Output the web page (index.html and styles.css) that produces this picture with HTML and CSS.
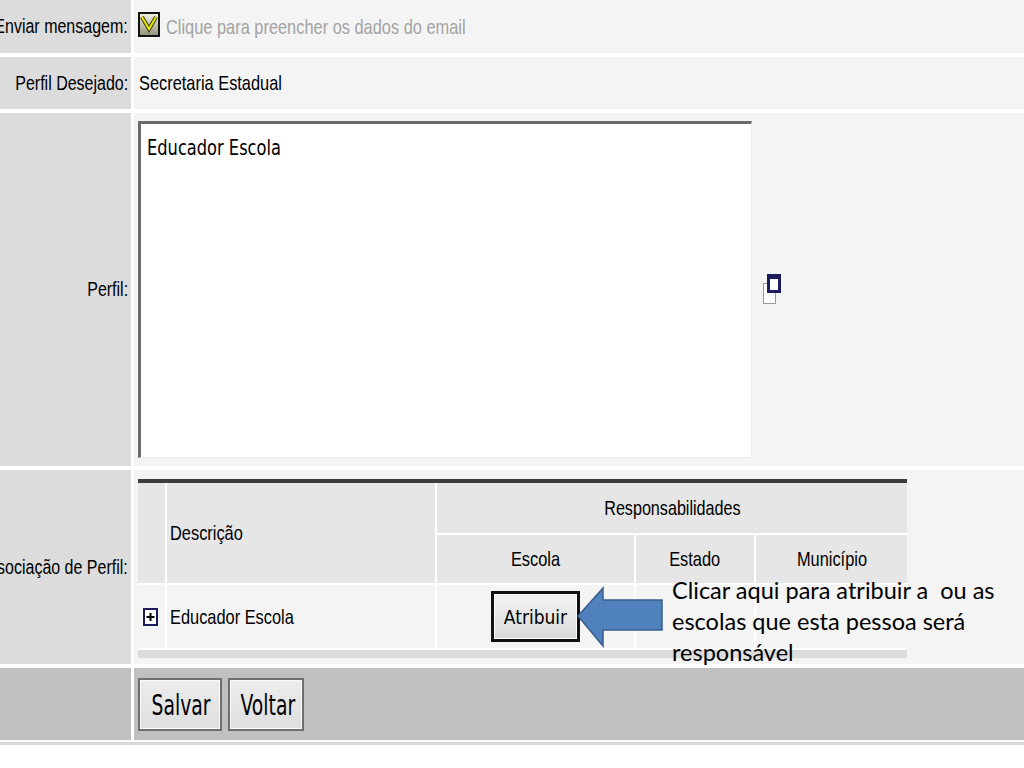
FILE: index.html
```html
<!DOCTYPE html>
<html lang="pt-BR">
<head>
    <meta charset="UTF-8">
    <meta name="viewport" content="width=device-width, initial-scale=1.0">
    <title>Associação de Perfil</title>
    <link rel="stylesheet" href="styles.css">
</head>
<body>
    <div class="form">
        <!-- enviar mensagem -->
        <div class="label"><span class="sq r">Enviar mensagem:</span></div>
        <div class="value">
            <svg class="check" width="22" height="25" viewBox="0 0 22 25">
                <defs>
                    <linearGradient id="cbg" x1="0" y1="0" x2="0" y2="1">
                        <stop offset="0" stop-color="#f6f6e8"/>
                        <stop offset="1" stop-color="#8f8f78"/>
                    </linearGradient>
                </defs>
                <rect x="1" y="1" width="20" height="23" fill="url(#cbg)" stroke="#111" stroke-width="2"/>
                <polyline points="4,5 11,17 18,5" fill="none" stroke="#3a3a10" stroke-width="4"/>
                <polyline points="4,5 11,17 18,5" fill="none" stroke="#e8e800" stroke-width="2"/>
            </svg>
            <span class="sq hint">Clique para preencher os dados do email</span>
        </div>

        <!-- perfil desejado -->
        <div class="label"><span class="sq r">Perfil Desejado:</span></div>
        <div class="value text"><span class="sq">Secretaria Estadual</span></div>

        <!-- perfil -->
        <div class="label"><span class="sq r">Perfil:</span></div>
        <div class="value perfil">
            <div class="listbox"><span class="sq">Educador Escola</span></div>
            <svg class="popup" width="18" height="30" viewBox="0 0 18 30">
                <rect x="0.5" y="9.5" width="12" height="20" fill="#fff" stroke="#9a9a9a"/>
                <rect x="4" y="0" width="14" height="19" fill="#1c1c5c"/>
                <rect x="7" y="5" width="8" height="11" fill="#fff"/>
            </svg>
        </div>

        <!-- associação de perfil -->
        <div class="label"><span class="sq r">Associação de Perfil:</span></div>
        <div class="value assoc">
            <div class="grid">
                <div class="th span2"></div>
                <div class="th span2 desc"><span class="sq">Descrição</span></div>
                <div class="th span3 resp"><span class="sq c">Responsabilidades</span></div>
                <div class="th"><span class="sq c">Escola</span></div>
                <div class="th"><span class="sq c">Estado</span></div>
                <div class="th"><span class="sq c">Município</span></div>

                <div class="td icon">
                    <svg width="15" height="18" viewBox="0 0 15 18">
                        <rect x="1" y="1" width="13" height="16" fill="#fff" stroke="#1c1c5c" stroke-width="2"/>
                        <path d="M3.5 9h8M7.5 5v8" stroke="#000" stroke-width="2"/>
                    </svg>
                </div>
                <div class="td desc"><span class="sq">Educador Escola</span></div>
                <div class="td center"><button class="atribuir">Atribuir</button></div>
                <div class="td"></div>
                <div class="td"></div>

                <div class="tfoot"></div>
            </div>

            <svg class="arrow" width="88" height="62" viewBox="0 0 88 62">
                <path d="M2 30 L27 2 L27 14 L86 14 L86 44 L27 44 L27 60 Z" fill="#4f81bd" stroke="#385d8a" stroke-width="1.5"/>
            </svg>
            <div class="note">Clicar aqui para atribuir a  ou as
escolas que esta pessoa será
responsável</div>
        </div>

        <!-- botões -->
        <div class="label bar"></div>
        <div class="value bar buttons">
            <button class="btn salvar"><span class="sq c">Salvar</span></button>
            <button class="btn voltar"><span class="sq c">Voltar</span></button>
        </div>
    </div>
    <div class="rule"></div>
</body>
</html>
```

FILE: styles.css
```css
*{
    padding: 0;
    margin: 0;
    box-sizing: border-box;
}
body{
    background-color: #fff;
    color: #000;
    font-family: "Liberation Sans", Arial, sans-serif;
    font-size: 20px;
}

/* texto estreito como na tela original */
.sq{
    display: inline-block;
    white-space: nowrap;
    transform: scaleX(.78);
    transform-origin: left center;
}
.sq.r{
    transform-origin: right center;
}
.sq.c{
    transform-origin: center center;
}

/* tabela do formulário */
.form{
    display: grid;
    grid-template-columns: 131px 890px;
    grid-template-rows: 53px 52px 353px 194px 72px;
    gap: 4px 3px;
}
.label{
    background-color: #dcdcdc;
    display: flex;
    justify-content: flex-end;
    align-items: center;
    padding-right: 3px;
    white-space: nowrap;
    overflow: hidden;
}
.label .sq{
    transform: scaleX(.8);
}
.value{
    background-color: #f4f4f4;
    display: flex;
    align-items: center;
    padding-left: 4px;
}
.value.text{
    padding-left: 5px;
    font-size: 21px;
}
.bar{
    background-color: #c0c0c0;
}

/* enviar mensagem */
.check{
    margin-top: -4px;
}
.hint{
    color: #a3a3a3;
    font-size: 21px;
    margin-left: 6px;
}

/* perfil */
.listbox{
    align-self: flex-start;
    margin-top: 8px;
    width: 614px;
    height: 337px;
    background-color: #fff;
    border-top: 3px solid #6b6b6b;
    border-left: 3px solid #6b6b6b;
    border-right: 1px solid #ececec;
    border-bottom: 1px solid #ececec;
    padding: 11px 6px;
    font-family: "DejaVu Sans Condensed", "DejaVu Sans", sans-serif;
    font-size: 21px;
    line-height: 26px;
}
.listbox .sq{
    transform: scaleX(.86);
}
.popup{
    margin-left: 11px;
    margin-top: -2px;
}

/* associação */
.assoc{
    position: relative;
    align-items: flex-start;
    padding-top: 9px;
}
.grid{
    display: grid;
    grid-template-columns: 27px 268px 197px 118px 151px;
    grid-template-rows: 50px 48px 63px 8px;
    gap: 2px;
    width: 769px;
    border-top: 4px solid #3b3b3b;
    background-color: #fff;
}
.th{
    background-color: #e6e6e6;
    display: flex;
    align-items: center;
    justify-content: center;
    font-size: 21px;
}
.th.resp{
    font-size: 20.7px;
}
.span2{
    grid-row: span 2;
}
.span3{
    grid-column: span 3;
}
.th.desc, .td.desc{
    justify-content: flex-start;
    padding-left: 3px;
}
.td{
    background-color: #f4f4f4;
    display: flex;
    align-items: center;
    justify-content: center;
    font-size: 21px;
}
.td.icon{
    justify-content: flex-start;
    padding-left: 5px;
}
.tfoot{
    grid-column: span 5;
    background-color: #dcdcdc;
}
.atribuir{
    width: 89px;
    height: 51px;
    border: 3px solid #111;
    background: linear-gradient(#f3f3f3, #d9d9d9);
    box-shadow: inset 0 0 0 1px #fff;
    font-family: "DejaVu Sans Condensed", "DejaVu Sans", sans-serif;
    font-size: 19px;
    color: #000;
}

/* seta e anotação */
.arrow{
    position: absolute;
    left: 442px;
    top: 116px;
}
.note{
    position: absolute;
    left: 538px;
    top: 105px;
    white-space: pre;
    font-family: Lato, "Open Sans", sans-serif;
    font-size: 23.5px;
    line-height: 31px;
}

/* botões */
.buttons{
    align-items: flex-start;
    padding-top: 10px;
    gap: 6px;
}
.btn{
    height: 53px;
    border: 2px solid #6e6e6e;
    background: linear-gradient(#ededed, #dedede);
    box-shadow: inset 0 0 0 1px #fafafa;
    font-family: "DejaVu Sans Condensed", "DejaVu Sans", sans-serif;
    font-size: 29px;
    color: #000;
}
.btn .sq{
    transform: scaleX(.72);
}
.salvar{
    width: 84px;
}
.voltar{
    width: 76px;
}

.rule{
    margin-top: 2px;
    height: 3px;
    background-color: #d9d9d9;
}
```
